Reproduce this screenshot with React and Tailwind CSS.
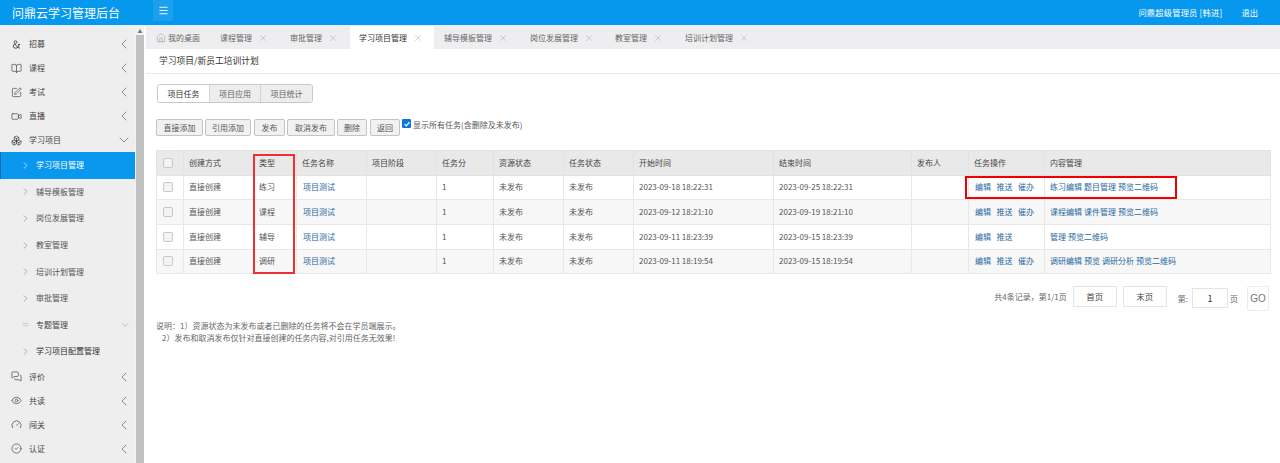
import React from "react";
import { BookOpen, SquarePen, Video, Eye, CircleCheck, ChevronLeft, ChevronDown, ChevronRight, Home, X, Menu, Boxes, Gauge, Ampersand, Equal, MessagesSquare } from "lucide-react";

const font = { fontFamily: '"Noto Sans CJK SC", "Liberation Sans", sans-serif' };

function Top({ Icon, label, open, sw = 1.5 }) {
  return (
    <div className="flex h-6 items-center pl-[11px] pr-[3px] text-[#444]">
      <Icon size={11} strokeWidth={sw} className="w-[11px] shrink-0" />
      <span className="ml-[7px] flex-1 text-[8px]">{label}</span>
      {open ? <ChevronDown size={16} strokeWidth={1} className="text-[#555]" /> : <ChevronLeft size={16} strokeWidth={1} className="text-[#555]" />}
    </div>
  );
}

function Sub({ label, active, dark }) {
  return (
    <div className={`flex h-[26.6px] shrink-0 items-center text-[8px] ${active ? "border-l border-[#0a68ad] bg-[#0a98ee] pl-[19px] text-white" : dark ? "pl-[20px] text-[#333]" : "pl-[20px] text-[#555]"}`}>
      <ChevronRight size={11} strokeWidth={1.4} className={active ? "text-white" : "text-[#888]"} />
      <span className="ml-[5px]">{label}</span>
    </div>
  );
}

function Tab({ label, active, className = "" }) {
  return (
    <div className={`flex h-full items-center ${active ? "bg-white text-[#333]" : "text-[#666]"} ${className}`}>
      <span>{label}</span>
      <X size={10} strokeWidth={1} className="ml-[6px] text-[#999]" />
    </div>
  );
}

function Btn({ children, w }) {
  return (
    <button className={`h-[17px] rounded-[2px] border border-[#c4c4c4] bg-[#f1f1f1] text-[8px] text-[#555] ${w}`}>{children}</button>
  );
}

const Lnk = ({ children, className = "" }) => <a className={`text-[#28679f] ${className}`}>{children}</a>;
const Check = () => <span className="block h-[10px] w-[10px] rounded-[2px] border border-[#c8c8c8] bg-[#f3f3f3]" />;

const rows = [
  { type: "练习", start: "2023-09-18 18:22:31", end: "2023-09-25 18:22:31", ops: ["编辑", "推送", "催办"], links: ["练习编辑", "题目管理", "预览二维码"] },
  { type: "课程", start: "2023-09-12 18:21:10", end: "2023-09-19 18:21:10", ops: ["编辑", "推送", "催办"], links: ["课程编辑", "课件管理", "预览二维码"] },
  { type: "辅导", start: "2023-09-11 18:23:39", end: "2023-09-15 18:23:39", ops: ["编辑", "推送"], links: ["管理", "预览二维码"] },
  { type: "调研", start: "2023-09-11 18:19:54", end: "2023-09-15 18:19:54", ops: ["编辑", "推送", "催办"], links: ["调研编辑", "预览", "调研分析", "预览二维码"] },
];

const widths = ["w-[27px]", "w-[70px]", "w-[43px]", "w-[70px]", "w-[70px]", "w-[57px]", "w-[70px]", "w-[70px]", "w-[140px]", "w-[138px]", "w-[57px]", "w-[76px]", "w-[226px]"];
const heads = ["创建方式", "类型", "任务名称", "项目阶段", "任务分", "资源状态", "任务状态", "开始时间", "结束时间", "发布人", "任务操作", "内容管理"];

export default function App() {
  return (
    <div className="flex h-[463px] w-[1280px] flex-col overflow-hidden bg-white" style={font}>
      <header className="flex h-[25px] shrink-0 items-center bg-[#0598ec] text-white">
        <div className="w-[153px] pl-[12px] text-[12px]">问鼎云学习管理后台</div>
        <div className="flex h-[21px] w-[20px] items-center justify-center self-start bg-[#1ca0ee]">
          <Menu size={11} strokeWidth={2} />
        </div>
        <div className="ml-auto flex text-[8.25px]">
          <span className="tracking-[0.2px]">问鼎超级管理员 [韩进]</span>
          <span className="ml-[19px] mr-[22px]">退出</span>
        </div>
      </header>
      <div className="flex min-h-0 flex-1 border-t border-[#e3f2fc]">
        <aside className="flex w-[135px] shrink-0 flex-col overflow-hidden bg-[#eeeeee] pt-[6px]">
          <Top Icon={Ampersand} label="招募" sw={2} />
          <Top Icon={BookOpen} label="课程" />
          <Top Icon={SquarePen} label="考试" />
          <Top Icon={Video} label="直播" />
          <Top Icon={Boxes} label="学习项目" open />
          <Sub label="学习项目管理" active />
          <Sub label="辅导模板管理" />
          <Sub label="岗位发展管理" />
          <Sub label="教室管理" />
          <Sub label="培训计划管理" />
          <Sub label="审批管理" />
          <div className="flex h-[26.6px] shrink-0 items-center pl-[21px] pr-[5px] text-[8px] text-[#444]">
            <Equal size={9} strokeWidth={1} className="text-[#999]" />
            <span className="ml-[6px] flex-1">专题管理</span>
            <ChevronDown size={10} strokeWidth={1.2} className="text-[#888]" />
          </div>
          <Sub label="学习项目配置管理" dark />
          <Top Icon={MessagesSquare} label="评价" />
          <Top Icon={Eye} label="共读" />
          <Top Icon={Gauge} label="闯关" />
          <Top Icon={CircleCheck} label="认证" />
        </aside>
        <div className="flex w-[9px] shrink-0 flex-col bg-[#f1f1f1] pl-[1px]">
          <div className="flex h-[9px] items-center justify-center text-[5px] leading-none text-[#777]">▲</div>
          <div className="flex-1 bg-[#c1c1c1]" />
        </div>
        <main className="ml-[2px] flex min-w-0 flex-1 flex-col">
          <nav className="flex h-[23px] shrink-0 items-center bg-[#eeeef0] text-[8px]">
            <div className="flex w-[74px] items-center pl-[10px] text-[#666]">
              <Home size={10} strokeWidth={1} className="text-[#777]" />
              <span className="ml-[2px]">我的桌面</span>
            </div>
            <Tab label="课程管理" className="w-[70px]" />
            <Tab label="审批管理" className="w-[60px]" />
            <Tab label="学习项目管理" active className="w-[84px] pl-[9px]" />
            <Tab label="辅导模板管理" className="w-[96px] pl-[10px]" />
            <Tab label="岗位发展管理" className="w-[85px]" />
            <Tab label="教室管理" className="w-[70px]" />
            <Tab label="培训计划管理" />
          </nav>
          <div className="flex h-[25px] shrink-0 items-center border-b border-[#e8e8e8] pl-[13px] text-[8.75px] text-[#333]">学习项目/新员工培训计划</div>
          <div className="flex flex-col px-[10px]">
            <div className="ml-[1px] mt-[10px] flex h-[19px] w-[156px] overflow-hidden rounded-[3px] border border-[#c8c8c8] text-[8px] text-[#666]">
              <div className="flex w-[51px] items-center justify-center bg-white text-[#333]">项目任务</div>
              <div className="flex w-[51px] items-center justify-center border-l border-[#d4d4d4] bg-[#ededed]">项目应用</div>
              <div className="flex flex-1 items-center justify-center border-l border-[#d4d4d4] bg-[#ededed]">项目统计</div>
            </div>
            <div className="mt-[16px] flex h-[17px] items-start">
              <Btn w="w-[47px]">直接添加</Btn>
              <Btn w="ml-[2px] w-[46px]">引用添加</Btn>
              <Btn w="ml-[3px] w-[31px]">发布</Btn>
              <Btn w="ml-[2px] w-[48px]">取消发布</Btn>
              <Btn w="ml-[2px] w-[30px]">删除</Btn>
              <Btn w="ml-[3px] w-[30px]">返回</Btn>
              <span className="ml-[2px] flex h-[9px] w-[9px] items-center justify-center rounded-[1px] bg-[#0b76e0]">
                <svg viewBox="0 0 10 10" className="h-[8px] w-[8px]"><path d="M2 5.2 4.2 7.4 8 2.8" fill="none" stroke="#fff" strokeWidth="1.6" /></svg>
              </span>
              <span className="ml-[2px] text-[8px] leading-[12px] text-[#555]">显示所有任务(含删除及未发布)</span>
            </div>
            <div className="relative mt-[14px]">
              <table className="w-[1114px] table-fixed border-collapse text-[8px] text-[#555]">
                <colgroup>{widths.map((w, i) => <col key={i} className={w} />)}</colgroup>
                <thead>
                  <tr className="h-[24.5px] bg-[#e9e9e9]">
                    <th className="border border-[#e4e4e4] pl-[6px] font-normal"><Check /></th>
                    {heads.map((h) => <th key={h} className="border border-[#e2e2e2] pl-[5px] text-left font-normal text-[#444]">{h}</th>)}
                  </tr>
                </thead>
                <tbody>
                  {rows.map((r, i) => (
                    <tr key={i} className={`h-[24.7px] ${i % 2 ? "bg-[#f7f7f7]" : "bg-white"}`}>
                      <td className="border border-[#e8e8e8] pl-[6px]"><Check /></td>
                      <td className="border border-[#e8e8e8] pl-[5px]">直接创建</td>
                      <td className="border border-[#e8e8e8] pl-[5px]">{r.type}</td>
                      <td className="border border-[#e8e8e8] pl-[6px]"><Lnk>项目测试</Lnk></td>
                      <td className="border border-[#e8e8e8]" />
                      <td className="border border-[#e8e8e8] pl-[5px]">1</td>
                      <td className="border border-[#e8e8e8] pl-[5px]">未发布</td>
                      <td className="border border-[#e8e8e8] pl-[5px]">未发布</td>
                      <td className="border border-[#e8e8e8] pl-[5px]">{r.start}</td>
                      <td className="border border-[#e8e8e8] pl-[5px]">{r.end}</td>
                      <td className="border border-[#e8e8e8]" />
                      <td className="border border-[#e8e8e8] pl-[6px]">
                        {r.ops.map((o, j) => <Lnk key={o} className={j ? "ml-[5.5px]" : ""}>{o}</Lnk>)}
                      </td>
                      <td className="border border-[#e8e8e8] pl-[5px]">
                        {r.links.map((l, j) => <Lnk key={l} className={j ? "ml-[2px]" : ""}>{l}</Lnk>)}
                      </td>
                    </tr>
                  ))}
                </tbody>
              </table>
              <div className="absolute left-[97px] top-[4px] h-[120px] w-[42px] border-2 border-[#f03030]" />
              <div className="absolute left-[809px] top-[26px] h-[23px] w-[212px] border-2 border-[#f00000]" />
            </div>
            <div className="mt-[12px] flex h-[26px] items-start justify-end text-[8px] text-[#666]">
              <span className="mt-[5px]">{"共4条记录\uFF0C第1/1页"}</span>
              <button className="ml-[6px] h-[21px] w-[44px] border border-[#e4e4e4] bg-white text-[8.5px] text-[#444]">首页</button>
              <button className="ml-[6px] h-[21px] w-[44px] border border-[#e4e4e4] bg-white text-[8.5px] text-[#444]">末页</button>
              <span className="ml-[11px] mt-[7px]">第:</span>
              <span className="ml-[4px] mt-[2px] flex h-[20px] w-[36px] items-center justify-center border border-[#e4e4e4] text-[9px] text-[#333]">1</span>
              <span className="ml-[2px] mt-[7px]">页</span>
              <button className="ml-[9px] mr-[1px] h-[25px] w-[22px] rounded-[2px] border border-[#ececec] bg-white text-[10px] text-[#777]" style={{ fontFamily: '"Liberation Sans", sans-serif' }}>GO</button>
            </div>
            <div className="mt-[8px] text-[8px] leading-[11.5px] text-[#666]">
              <p>{"说明\uFF1A1\uFF09资源状态为未发布或者已删除的任务将不会在学员端展示\u3002"}</p>
              <p className="pl-[6px]">{"2\uFF09发布和取消发布仅针对直接创建的任务内容,对引用任务无效果!"}</p>
            </div>
          </div>
        </main>
      </div>
    </div>
  );
}
